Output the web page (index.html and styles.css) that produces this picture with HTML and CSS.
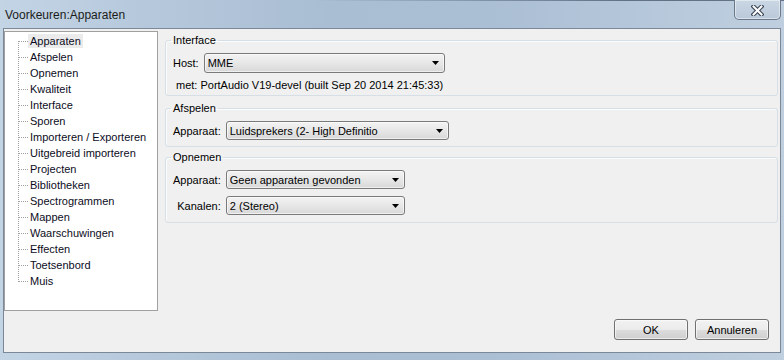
FILE: index.html
```html
<!DOCTYPE html>
<html lang="nl">
<head>
<meta charset="utf-8">
<title>Voorkeuren:Apparaten</title>
<link rel="stylesheet" href="styles.css">
</head>
<body>
<div class="window">
  <div class="titlebar">
    <span class="title">Voorkeuren:Apparaten</span>
    <div class="close">
      <svg width="13" height="11" viewBox="0 0 13 11">
        <path d="M2.5 1.5 L10.5 9.5 M10.5 1.5 L2.5 9.5" stroke="#3c4656" stroke-width="4.2" stroke-linecap="square" fill="none"/>
        <path d="M2.5 1.5 L10.5 9.5 M10.5 1.5 L2.5 9.5" stroke="#ffffff" stroke-width="2" stroke-linecap="square" fill="none"/>
      </svg>
    </div>
  </div>
  <div class="client">
    <div class="main">
      <ul class="tree">
        <li><span class="sel">Apparaten</span></li>
        <li><span>Afspelen</span></li>
        <li><span>Opnemen</span></li>
        <li><span>Kwaliteit</span></li>
        <li><span>Interface</span></li>
        <li><span>Sporen</span></li>
        <li><span>Importeren / Exporteren</span></li>
        <li><span>Uitgebreid importeren</span></li>
        <li><span>Projecten</span></li>
        <li><span>Bibliotheken</span></li>
        <li><span>Spectrogrammen</span></li>
        <li><span>Mappen</span></li>
        <li><span>Waarschuwingen</span></li>
        <li><span>Effecten</span></li>
        <li><span>Toetsenbord</span></li>
        <li><span>Muis</span></li>
      </ul>
      <div class="panels">
        <fieldset class="group g1">
          <legend>Interface</legend>
          <div class="row">
            <span class="lbl">Host:</span>
            <div class="combo w-host"><span class="val">MME</span><svg class="arrow" width="7" height="4" viewBox="0 0 7 4"><path d="M0 0H7L3.5 4Z" fill="#000"/></svg></div>
          </div>
          <div class="info">met: PortAudio V19-devel (built Sep 20 2014 21:45:33)</div>
        </fieldset>
        <fieldset class="group g2">
          <legend>Afspelen</legend>
          <div class="row">
            <span class="lbl">Apparaat:</span>
            <div class="combo short w-play"><span class="val">Luidsprekers (2- High Definitio</span><svg class="arrow" width="7" height="4" viewBox="0 0 7 4"><path d="M0 0H7L3.5 4Z" fill="#000"/></svg></div>
          </div>
        </fieldset>
        <fieldset class="group g3">
          <legend>Opnemen</legend>
          <div class="grid">
            <span class="lbl">Apparaat:</span>
            <div class="combo short w-rec"><span class="val">Geen apparaten gevonden</span><svg class="arrow" width="7" height="4" viewBox="0 0 7 4"><path d="M0 0H7L3.5 4Z" fill="#000"/></svg></div>
            <span class="lbl">Kanalen:</span>
            <div class="combo short w-rec"><span class="val">2 (Stereo)</span><svg class="arrow" width="7" height="4" viewBox="0 0 7 4"><path d="M0 0H7L3.5 4Z" fill="#000"/></svg></div>
          </div>
        </fieldset>
      </div>
    </div>
    <div class="buttons">
      <button class="btn">OK</button>
      <button class="btn">Annuleren</button>
    </div>
  </div>
</div>
</body>
</html>
```

FILE: styles.css
```css
html, body {
  margin: 0;
  padding: 0;
}

body {
  width: 784px;
  height: 360px;
  overflow: hidden;
  background: linear-gradient(to right, #c3d4e5 0%, #b6c9dc 18%, #a9bdd3 42%, #aabed4 62%, #b5c7da 82%, #bfcfdf 100%);
  font-family: "Liberation Sans", Arial, sans-serif;
  font-size: 11px;
  color: #000;
}

.window {
  display: flex;
  flex-direction: column;
  height: 360px;
}

.titlebar {
  flex: none;
  height: 28px;
  display: flex;
  align-items: flex-start;
  background: linear-gradient(to right, rgba(70, 85, 105, 0) 40%, rgba(70, 85, 105, 0.75) 80%) top / 100% 1px no-repeat;
}

.title {
  margin: 8px 0 0 5px;
  font-size: 12px;
  line-height: 14px;
  color: #1b1b1b;
}

.close {
  margin-left: auto;
  margin-right: 3px;
  width: 47px;
  height: 20px;
  box-sizing: border-box;
  border: 1px solid #6a788a;
  border-top: none;
  border-radius: 0 0 5px 5px;
  background: linear-gradient(#cad7e4, #bac9d9);
  box-shadow: inset 0 0 0 1px rgba(255, 255, 255, 0.45);
  display: flex;
  align-items: center;
  justify-content: center;
}

.close svg {
  display: block;
  margin-top: 1px;
}

.client {
  flex: none;
  height: 325px;
  margin: 0 3px;
  box-sizing: border-box;
  border: 1px solid #7b8898;
  background: #f0f0f0;
  display: flex;
  flex-direction: column;
}

.main {
  display: flex;
  align-items: flex-start;
  padding-top: 2px;
}

.tree {
  position: relative;
  flex: none;
  width: 154px;
  height: 280px;
  box-sizing: border-box;
  margin: 0;
  padding: 1px 0 0 0;
  list-style: none;
  border: 1px solid #a0a0a0;
  background: #fff;
}

.tree::before {
  content: "";
  position: absolute;
  left: 13px;
  top: 9px;
  width: 1px;
  height: 241px;
  background: repeating-linear-gradient(to bottom, #a0a0a0 0 1px, transparent 1px 2px);
}

.tree li {
  position: relative;
  height: 16px;
  padding-left: 23px;
  white-space: nowrap;
}

.tree li::before {
  content: "";
  position: absolute;
  left: 14px;
  top: 8px;
  width: 9px;
  height: 1px;
  background: repeating-linear-gradient(to right, #a0a0a0 0 1px, transparent 1px 2px);
}

.tree li span {
  display: inline-block;
  margin-top: 1px;
  padding: 0 2px;
  line-height: 14px;
  color: #0c0c1c;
}

.tree li span.sel {
  background: #ebebeb;
}

.panels {
  flex: 1;
  margin: 0 2px 0 7px;
}

.group {
  margin: 0;
  padding: 6px 7px 6px;
  min-width: 0;
  border: 1px solid #d5dfe5;
  border-radius: 3px;
  box-shadow: inset 1px 1px 0 #fbfcfd;
}

.group legend {
  padding: 0 2px;
  margin-left: -2px;
  font-size: 11px;
  line-height: 13px;
}

.g1 {
  margin-top: 3px;
  padding-bottom: 3px;
}

.g2 {
  margin-top: 6px;
  padding-bottom: 6px;
}

.g3 {
  margin-top: 4px;
  padding-bottom: 7px;
}

.row {
  display: flex;
  align-items: center;
}

.lbl {
  margin-right: 5px;
  white-space: nowrap;
}

.grid {
  display: grid;
  grid-template-columns: auto auto;
  justify-content: start;
  align-items: center;
  row-gap: 7px;
}

.grid .lbl {
  justify-self: end;
}

.combo {
  height: 20px;
  box-sizing: border-box;
  display: flex;
  align-items: center;
  padding: 0 5px 0 3px;
  border: 1px solid #7a7a7a;
  border-radius: 3px;
  background: linear-gradient(#f3f3f3, #e7e7e7 50%, #d8d8d8);
  box-shadow: inset 0 0 0 1px rgba(255, 255, 255, 0.6);
  white-space: nowrap;
  overflow: hidden;
}

.combo.short {
  height: 19px;
}

.combo .val {
  flex: 1;
  overflow: hidden;
}

.combo .arrow {
  flex: none;
  display: block;
}

.w-host {
  width: 241px;
}

.w-play {
  width: 223px;
}

.w-rec {
  width: 179px;
}

.info {
  margin-top: 5px;
  padding-left: 3px;
  line-height: 14px;
  white-space: nowrap;
}

.buttons {
  display: flex;
  justify-content: flex-end;
  gap: 7px;
  margin-top: 8px;
  padding-right: 11px;
}

.btn {
  width: 74px;
  height: 21px;
  box-sizing: border-box;
  margin: 0;
  padding: 0;
  border: 1px solid #707070;
  border-radius: 3px;
  background: linear-gradient(#f2f2f2 0, #ebebeb 50%, #dddddd 51%, #cfcfcf 100%);
  box-shadow: inset 0 0 0 1px rgba(255, 255, 255, 0.6);
  font-family: "Liberation Sans", Arial, sans-serif;
  font-size: 11px;
  color: #000;
}
```
